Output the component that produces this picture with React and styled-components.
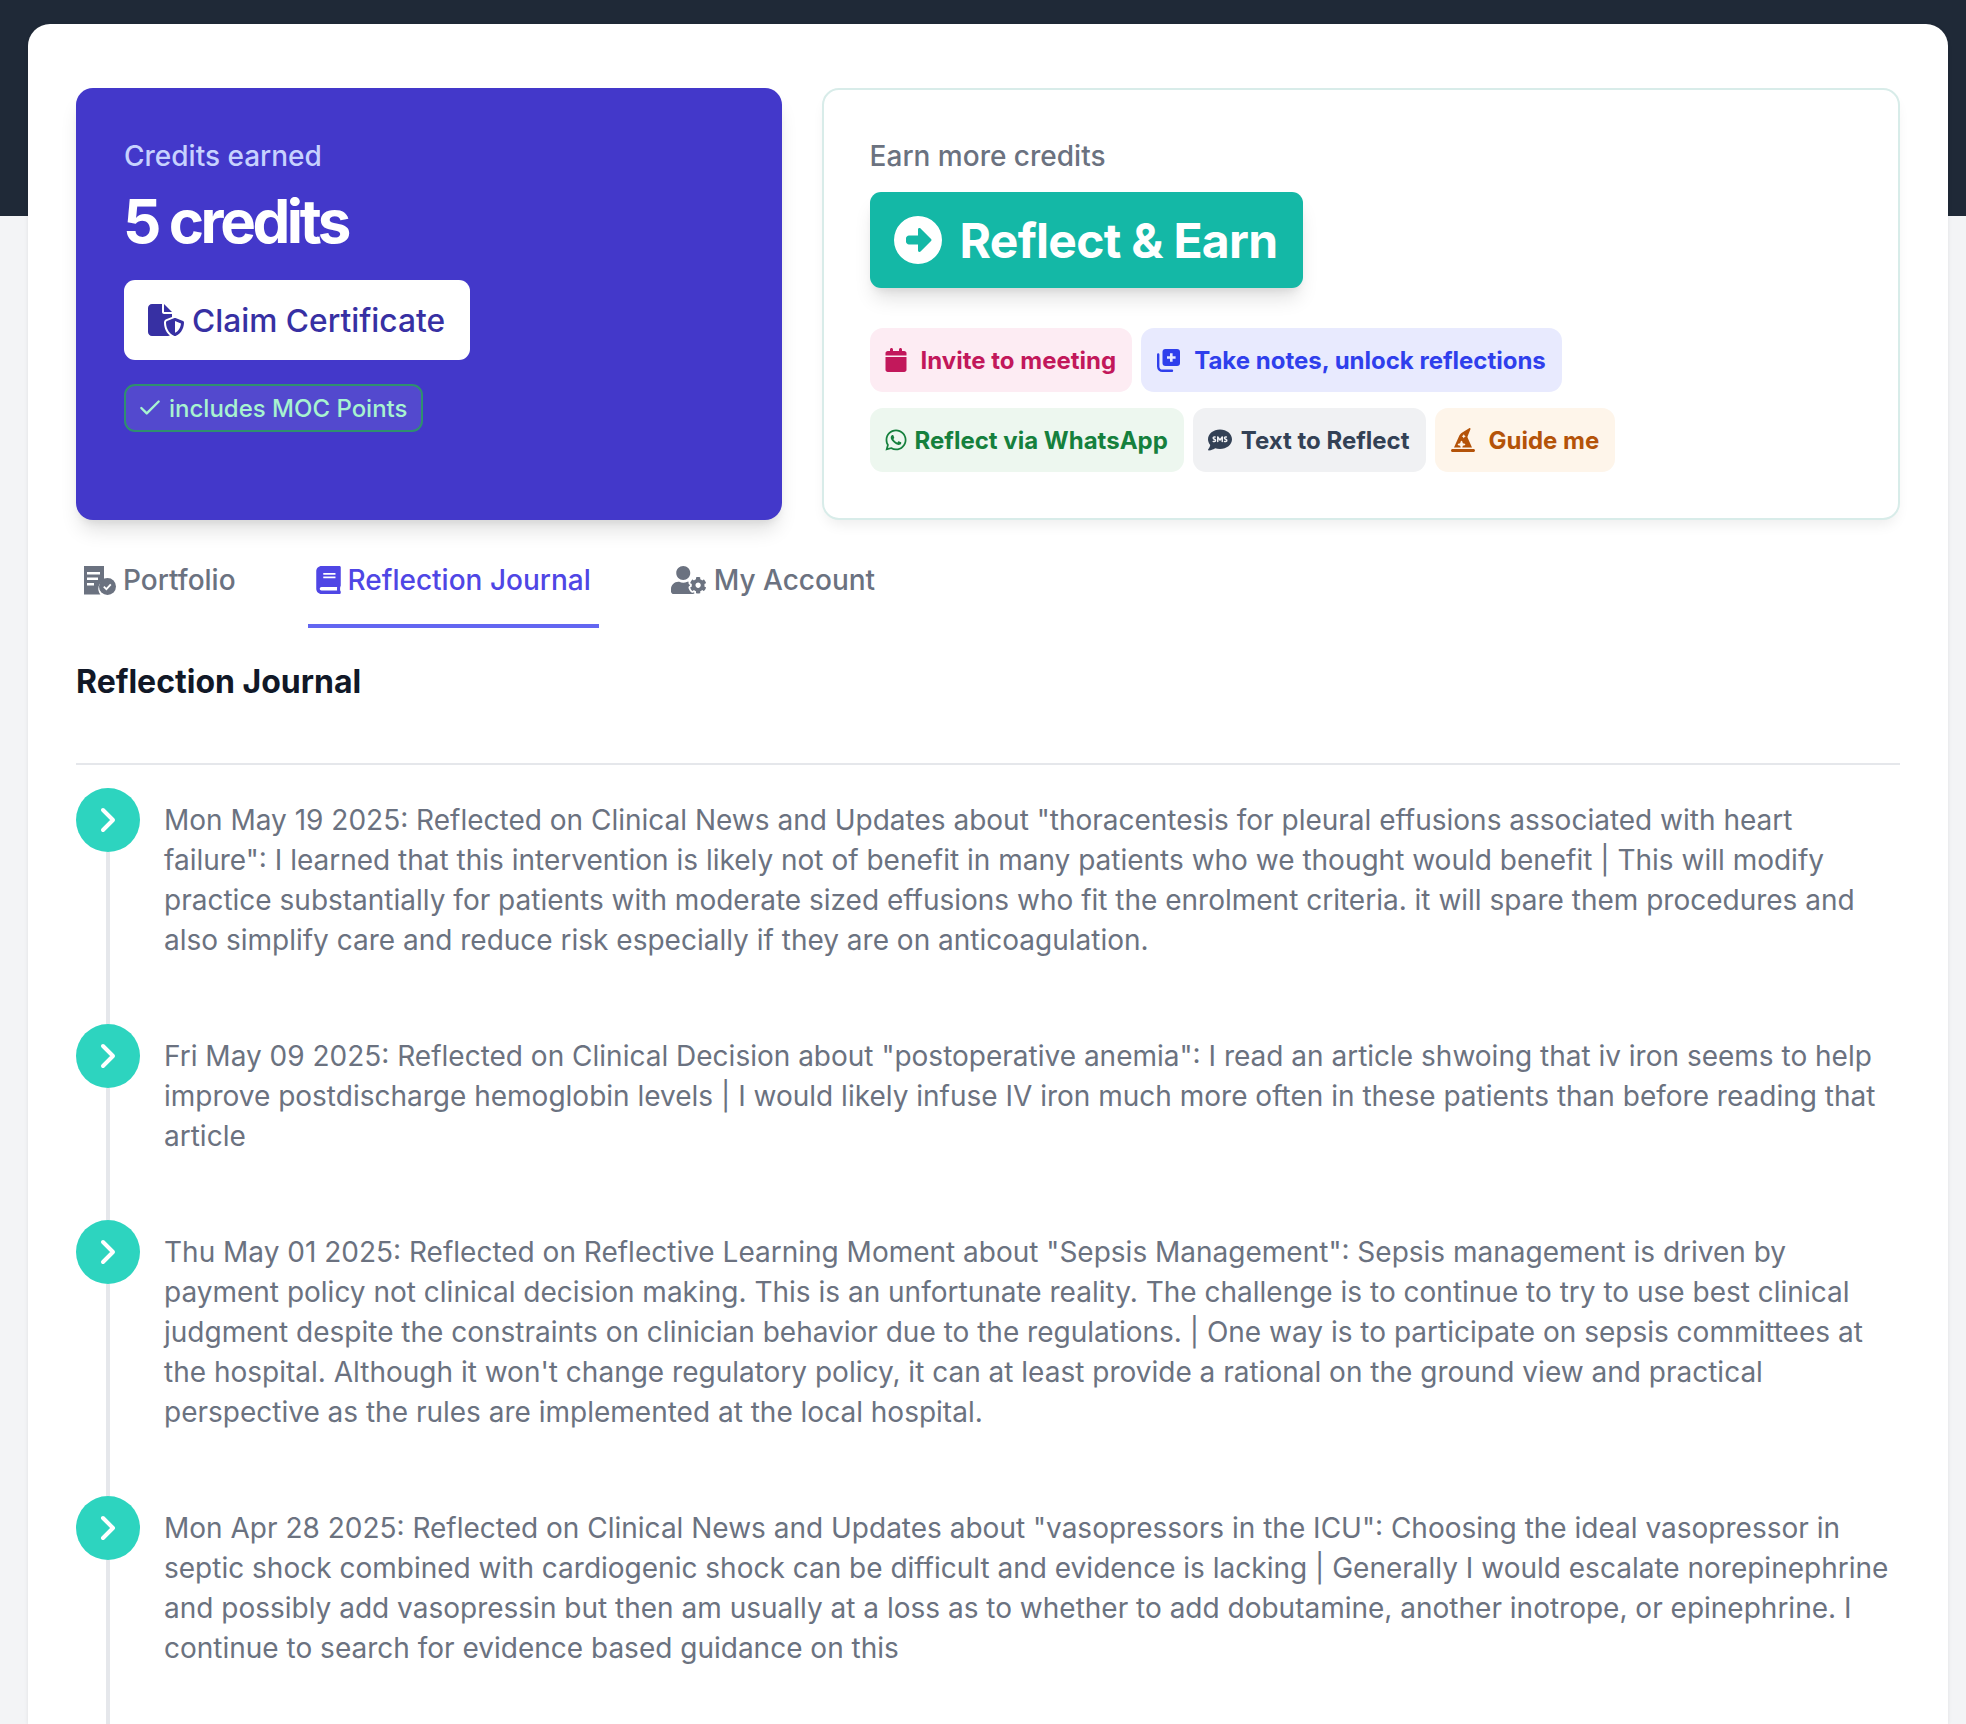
import React from 'react'
import styled, { createGlobalStyle } from 'styled-components'
import { FaCalendar, FaCircleRight, FaCommentSms, FaFileShield, FaHatWizard, FaWhatsapp } from 'react-icons/fa6'
import { FaBook, FaUserCog } from 'react-icons/fa'
import { Check, ChevronRight } from 'lucide-react'

const GlobalStyle = createGlobalStyle`
  * { box-sizing: border-box; }
  html, body {
    margin: 0;
    height: 1724px;
    overflow: hidden;
    background: #f3f4f6;
    font-family: Inter, "Liberation Sans", sans-serif;
  }
`

const Page = styled.div`
  height: 1724px;
  overflow: hidden;
  background: linear-gradient(#1f2937 216px, #f3f4f6 216px);
  padding: 24px 18px 0 28px;
`

const Sheet = styled.main`
  background: #fff;
  border-radius: 22px 22px 0 0;
  padding: 64px 48px 0;
  height: 1700px;
  box-shadow: 0 1px 4px rgba(0, 0, 0, 0.08);
`

const TopGrid = styled.section`
  display: grid;
  grid-template-columns: repeat(5, 1fr);
  column-gap: 40px;
  height: 432px;
`

const CreditsCard = styled.div`
  grid-column: span 2;
  background: #4338ca;
  border-radius: 17px;
  padding: 50px 48px;
  box-shadow: 0 14px 20px -4px rgba(0, 0, 0, 0.12), 0 6px 8px -4px rgba(0, 0, 0, 0.08);
`

const CreditsLabel = styled.div`
  color: #c7d2fe;
  font-size: 28px;
  line-height: 36px;
  font-weight: 500;
`

const CreditsValue = styled.div`
  color: #fff;
  font-size: 60px;
  line-height: 72px;
  font-weight: 700;
  letter-spacing: -0.057em;
  margin: 11px 0 0 -1px;
`

const ClaimButton = styled.button`
  display: flex;
  align-items: center;
  gap: 8px;
  height: 80px;
  width: 346px;
  padding: 0 24px;
  margin-top: 23px;
  border: 0;
  border-radius: 11px;
  background: #fff;
  color: #3730a3;
  font: 500 31.7px Inter, sans-serif;
  white-space: nowrap;
`

const MocBadge = styled.div`
  display: flex;
  align-items: center;
  gap: 6px;
  height: 48px;
  width: 299px;
  margin-top: 24px;
  padding: 0 11px;
  border: 2px solid #2f8f6f;
  border-radius: 11px;
  background: rgba(255, 255, 255, 0.09);
  color: #a7f3d0;
  font-size: 24px;
  font-weight: 500;
  white-space: nowrap;
`

const EarnCard = styled.div`
  grid-column: span 3;
  background: #fff;
  border: 2px solid #d8ece9;
  border-radius: 17px;
  padding: 48px 46px 44px;
  box-shadow: 0 8px 14px -4px rgba(0, 0, 0, 0.08);
`

const EarnLabel = styled.div`
  color: #6b7280;
  font-size: 28px;
  line-height: 36px;
  font-weight: 500;
`

const ReflectButton = styled.button`
  display: flex;
  align-items: center;
  gap: 18px;
  height: 96px;
  width: 433px;
  margin-top: 18px;
  padding: 0 24px;
  border: 0;
  border-radius: 11px;
  background: #14b8a6;
  color: #fff;
  font: 700 48px Inter, sans-serif;
  letter-spacing: -0.015em;
  box-shadow: 0 14px 20px -4px rgba(0, 0, 0, 0.12), 0 6px 8px -4px rgba(0, 0, 0, 0.08);
`

const ChipRow = styled.div`
  display: flex;
  gap: 9px;
  margin-top: ${({ $first }) => ($first ? 40 : 16)}px;
`

const Chip = styled.a`
  display: inline-flex;
  align-items: center;
  gap: ${({ $gap }) => $gap}px;
  height: 64px;
  padding: 0 16px 0 ${({ $left }) => $left}px;
  border-radius: 13px;
  background: ${({ $bg }) => $bg};
  color: ${({ $fg }) => $fg};
  font-size: 24px;
  font-weight: 700;
  white-space: nowrap;
`

const Tabs = styled.nav`
  display: flex;
  gap: 64px;
  height: 108px;
`

const Tab = styled.a`
  display: flex;
  align-items: center;
  gap: ${({ $gap }) => $gap}px;
  height: 108px;
  padding: 20px 8px 4px;
  color: ${({ $active }) => ($active ? '#4f46e5' : '#6b7280')};
  border-bottom: 4px solid ${({ $active }) => ($active ? '#6366f1' : 'transparent')};
  font-size: 28px;
  font-weight: 500;
`

const BookIcon = styled(FaBook)`
  width: 25px;
  height: 28px;
`

const AccountIcon = styled(FaUserCog)`
  width: 35px;
  height: 28px;
`

const ClaimIcon = styled(FaFileShield)`
  width: 36px;
  height: 32px;
  flex: none;
`

const Heading = styled.h2`
  margin: 34px 0 0;
  font-size: 32px;
  line-height: 40px;
  font-weight: 700;
  color: #111827;
`

const Divider = styled.hr`
  margin: 61px 0 23px;
  border: 0;
  height: 2px;
  background: #e5e7eb;
`

const Timeline = styled.ol`
  list-style: none;
  margin: 0;
  padding: 0;
`

const Entry = styled.li`
  position: relative;
  display: flex;
  gap: 24px;
  padding-bottom: 64px;

  &::before {
    content: '';
    position: absolute;
    left: 30px;
    top: 64px;
    bottom: 0;
    width: 4px;
    background: #e5e7eb;
  }

  &:last-child {
    padding-bottom: 200px;
  }
`

const Bullet = styled.span`
  flex: 0 0 64px;
  height: 64px;
  border-radius: 50%;
  background: #2dd4bf;
  color: #fff;
  display: flex;
  align-items: center;
  justify-content: center;
`

const EntryText = styled.p`
  margin: 12px 0 0;
  color: #6b7280;
  font-size: 28px;
  line-height: 40px;
`

const PortfolioIcon = () => (
  <svg width="32" height="29" viewBox="0 0 32 29" fill="#6b7280">
    <path d="M0 0h20v14.4a9 9 0 0 0-3.6 14.1H0z" />
    <path d="M3 6h13v2.4H3zM3 11.5h11v2.4H3zM3 17h7v2.4H3z" fill="#fff" />
    <circle cx="23.500" cy="20.500" r="8.500" />
    <path d="M19.800 20.600l2.600 2.600 4.400-4.800" fill="none" stroke="#fff" strokeWidth="1.800" />
  </svg>
)

const NotesIcon = () => (
  <svg width="23" height="23" viewBox="0 0 23 23" fill="currentColor">
    <path d="M8.500 0h11.500a3 3 0 0 1 3 3v11a3 3 0 0 1-3 3H8.500a3 3 0 0 1-3-3V3a3 3 0 0 1 3-3z" />
    <path d="M13 4.200h2.600v3h3v2.600h-3v3H13v-3h-3V7.200h3z" fill="#e8eafe" />
    <path d="M1.200 5.500V17.500a4.300 4.300 0 0 0 4.300 4.300H15" fill="none" stroke="currentColor" strokeWidth="2.400" strokeLinecap="round" />
  </svg>
)

const entries = [
  'Mon May 19 2025: Reflected on Clinical News and Updates about "thoracentesis for pleural effusions associated with heart failure": I learned that this intervention is likely not of benefit in many patients who we thought would benefit | This will modify practice substantially for patients with moderate sized effusions who fit the enrolment criteria. it will spare them procedures and also simplify care and reduce risk especially if they are on anticoagulation.',
  'Fri May 09 2025: Reflected on Clinical Decision about "postoperative anemia": I read an article shwoing that iv iron seems to help improve postdischarge hemoglobin levels | I would likely infuse IV iron much more often in these patients than before reading that article',
  'Thu May 01 2025: Reflected on Reflective Learning Moment about "Sepsis Management": Sepsis management is driven by payment policy not clinical decision making. This is an unfortunate reality. The challenge is to continue to try to use best clinical judgment despite the constraints on clinician behavior due to the regulations. | One way is to participate on sepsis committees at the hospital. Although it won\'t change regulatory policy, it can at least provide a rational on the ground view and practical perspective as the rules are implemented at the local hospital.',
  'Mon Apr 28 2025: Reflected on Clinical News and Updates about "vasopressors in the ICU": Choosing the ideal vasopressor in septic shock combined with cardiogenic shock can be difficult and evidence is lacking | Generally I would escalate norepinephrine and possibly add vasopressin but then am usually at a loss as to whether to add dobutamine, another inotrope, or epinephrine. I continue to search for evidence based guidance on this',
]

export default function App() {
  return (
    <Page>
      <GlobalStyle />
      <Sheet>
        <TopGrid>
          <CreditsCard>
            <CreditsLabel>Credits earned</CreditsLabel>
            <CreditsValue>5 credits</CreditsValue>
            <ClaimButton><ClaimIcon />Claim Certificate</ClaimButton>
            <MocBadge><Check size={26} strokeWidth={2.200} />includes MOC Points</MocBadge>
          </CreditsCard>
          <EarnCard>
            <EarnLabel>Earn more credits</EarnLabel>
            <ReflectButton><FaCircleRight size={48} />Reflect &amp; Earn</ReflectButton>
            <ChipRow $first>
              <Chip $bg="#fdecf3" $fg="#c2185b" $left={14} $gap={13}><FaCalendar size={24} />Invite to meeting</Chip>
              <Chip $bg="#e8eafe" $fg="#2f3fec" $left={16} $gap={14}><NotesIcon />Take notes, unlock reflections</Chip>
            </ChipRow>
            <ChipRow>
              <Chip $bg="#edf7ef" $fg="#15803d" $left={14} $gap={7}><FaWhatsapp size={24} />Reflect via WhatsApp</Chip>
              <Chip $bg="#f0f1f3" $fg="#334155" $left={15} $gap={9}><FaCommentSms size={24} />Text to Reflect</Chip>
              <Chip $bg="#fef5ea" $fg="#b45309" $left={16} $gap={14}><FaHatWizard size={24} />Guide me</Chip>
            </ChipRow>
          </EarnCard>
        </TopGrid>
        <Tabs>
          <Tab $gap={7}><PortfolioIcon />Portfolio</Tab>
          <Tab $active $gap={7}><BookIcon />Reflection Journal</Tab>
          <Tab $gap={8}><AccountIcon />My Account</Tab>
        </Tabs>
        <Heading>Reflection Journal</Heading>
        <Divider />
        <Timeline>
          {entries.map((text) => (
            <Entry key={text.slice(0, 16)}>
              <Bullet><ChevronRight size={40} strokeWidth={2.400} /></Bullet>
              <EntryText>{text}</EntryText>
            </Entry>
          ))}
        </Timeline>
      </Sheet>
    </Page>
  )
}
